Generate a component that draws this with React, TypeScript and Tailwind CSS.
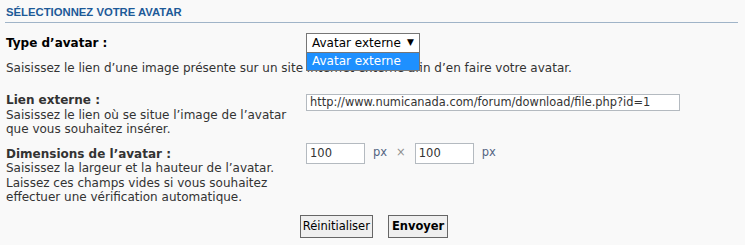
import React from "react";

export default function App() {
  return (
    <div className="w-[745px] h-[245px] bg-[#f9f9f9] overflow-hidden font-['DejaVu_Sans',sans-serif] text-[12px] text-[#333333]">
      <div className="pl-[5px] pt-[6px] w-[738px]">
        <h3 className="pl-[1px] h-[17px] leading-[13px] border-b border-[#a0b4c8] text-[11.3px] font-bold uppercase text-[#1d5a98] font-['Liberation_Sans',sans-serif]">
          Sélectionnez votre avatar
        </h3>

        <div className="pl-[1px]">
          <div className="relative flex items-start mt-[10px]">
            <div className="w-[300px] pt-[3px] font-bold text-[12px] leading-[14px] text-[#000000]">Type d’avatar :</div>
            <div className="relative">
              <div className="flex items-center justify-between w-[114px] h-[20px] border border-[#767676] bg-white pl-[5px] pr-[5px] text-[12px] text-[#000000]">
                <span>Avatar externe</span>
                <span className="text-[9px]">▼</span>
              </div>
              <div className="absolute left-0 top-[20px] w-[114px] h-[18px] bg-[#1e90ff] border border-[#767676] border-t-0 pl-[5px] text-[12px] leading-[17px] text-white z-10">
                Avatar externe
              </div>
            </div>
          </div>

          <p className="mt-[8px] leading-[15px]">
            Saisissez le lien d’une image présente sur un site internet externe afin d’en faire votre avatar.
          </p>

          <div className="flex items-start mt-[17px]">
            <div className="w-[300px] leading-[14.5px]">
              <div className="font-bold">Lien externe :</div>
              <div>Saisissez le lien où se situe l’image de l’avatar</div>
              <div>que vous souhaitez insérer.</div>
            </div>
            <div className="w-[374px] h-[17px] mt-[1px] border border-[#b4bac0] bg-white pl-[3px] text-[11.4px] leading-[15px] whitespace-nowrap overflow-hidden">
              http://www.numicanada.com/forum/download/file.php?id=1
            </div>
          </div>

          <div className="flex items-start mt-[10px]">
            <div className="w-[300px] leading-[14.5px]">
              <div className="font-bold">Dimensions de l’avatar :</div>
              <div>Saisissez la largeur et la hauteur de l’avatar.</div>
              <div>Laissez ces champs vides si vous souhaitez</div>
              <div>effectuer une vérification automatique.</div>
            </div>
            <div className="flex items-center mt-[-4px] text-[11.5px]">
              <div className="w-[59px] h-[21px] border border-[#b4bac0] bg-white pl-[3px] leading-[19px]">100</div>
              <span className="ml-[8px] text-[#536482]">px</span>
              <span className="ml-[9px] text-[#8f8f8f]">×</span>
              <div className="ml-[9px] w-[59px] h-[21px] border border-[#b4bac0] bg-white pl-[3px] leading-[19px]">100</div>
              <span className="ml-[8px] text-[#536482]">px</span>
            </div>
          </div>

          <div className="flex justify-center gap-[15px] mt-[10px] w-[736px]">
            <button className="h-[23px] px-[2px] border border-[#666666] bg-[#efefef] text-[11.5px] text-[#000000] leading-[20px]">Réinitialiser</button>
            <button className="h-[23px] px-[3px] border border-[#666666] bg-[#efefef] text-[11.5px] font-bold text-[#000000] leading-[20px]">Envoyer</button>
          </div>
        </div>
      </div>
    </div>
  );
}
